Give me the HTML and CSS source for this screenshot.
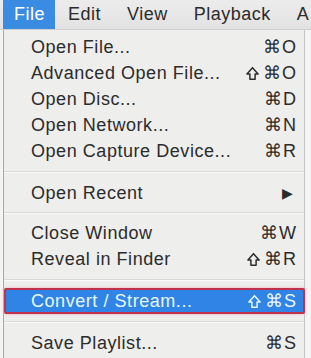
FILE: index.html
```html
<!DOCTYPE html>
<html lang="en">

<head>
    <meta charset="UTF-8">
    <meta name="viewport" content="width=device-width, initial-scale=1.0">
    <title>File Menu</title>
    <link rel="stylesheet" href="styles.css">
</head>

<body>
    <div class="menubar">
        <span class="title active">File</span>
        <span class="title">Edit</span>
        <span class="title">View</span>
        <span class="title">Playback</span>
        <span class="title">A</span>
    </div>
    <div class="menu">
        <div class="row"><span>Open File...</span><span class="key">⌘O</span></div>
        <div class="row"><span>Advanced Open File...</span><span class="key"><svg class="shift" viewBox="0 0 14 15"><path d="M7 1.2 L13 8 H9.8 V13.8 H4.2 V8 H1 Z"/></svg>⌘O</span></div>
        <div class="row"><span>Open Disc...</span><span class="key">⌘D</span></div>
        <div class="row"><span>Open Network...</span><span class="key">⌘N</span></div>
        <div class="row"><span>Open Capture Device...</span><span class="key">⌘R</span></div>
        <div class="sep"></div>
        <div class="row"><span>Open Recent</span><span class="arrow">▶</span></div>
        <div class="sep small"></div>
        <div class="row"><span>Close Window</span><span class="key">⌘W</span></div>
        <div class="row"><span>Reveal in Finder</span><span class="key"><svg class="shift" viewBox="0 0 14 15"><path d="M7 1.2 L13 8 H9.8 V13.8 H4.2 V8 H1 Z"/></svg>⌘R</span></div>
        <div class="sep"></div>
        <div class="row selected"><span>Convert / Stream...</span><span class="key"><svg class="shift" viewBox="0 0 14 15"><path d="M7 1.2 L13 8 H9.8 V13.8 H4.2 V8 H1 Z"/></svg>⌘S</span></div>
        <div class="sep"></div>
        <div class="row"><span>Save Playlist...</span><span class="key">⌘S</span></div>
    </div>
</body>

</html>
```

FILE: styles.css
```css
body {
    margin: 0;
    padding: 0;
    width: 311px;
    height: 358px;
    overflow: hidden;
    background-color: #f4f4f4;
    font-family: "Liberation Sans", Arial, sans-serif;
    color: #2b2b2b;
}

.menubar {
    height: 30px;
    display: flex;
    align-items: stretch;
    padding-left: 3px;
    background: linear-gradient(#ececec, #e2e2e2);
    border-bottom: 1px solid #cfcfcf;
    box-sizing: border-box;
    font-size: 18px;
    letter-spacing: 0.5px;
}

.title {
    display: flex;
    align-items: center;
    padding: 0 13px;
    white-space: nowrap;
}

.title.active {
    padding: 0 10px 0 11px;
    background-color: #3a8ce2;
    color: #fff;
}

.menu {
    margin-left: 3px;
    width: 302px;
    height: 328px;
    padding-top: 4px;
    box-sizing: border-box;
    background-color: #eeeeed;
    border-left: 1px solid #a9a9a9;
    border-right: 1px solid #c4c4c4;
}

.row {
    height: 26px;
    display: flex;
    align-items: center;
    justify-content: space-between;
    padding: 0 7px 0 27px;
    font-size: 18px;
    letter-spacing: 0.55px;
}

.key {
    display: flex;
    align-items: center;
    gap: 4px;
    letter-spacing: 1px;
}

.shift {
    width: 13px;
    height: 15px;
    fill: none;
    stroke: currentColor;
    stroke-width: 1.6;
    stroke-linejoin: round;
}

.arrow {
    font-size: 14px;
    padding-right: 3px;
}

.sep {
    height: 16px;
    display: flex;
    align-items: center;
}

.sep::before {
    content: "";
    flex: 1;
    height: 1px;
    background-color: #d9d9d9;
    border-bottom: 1px solid #fafafa;
}

.sep.small {
    height: 14px;
}

.row.selected {
    margin: 0 -1px 0 0;
    box-sizing: border-box;
    background-color: #2f84e6;
    border: 2px solid #c0324c;
    border-radius: 2px;
    box-shadow: 0 0 3px #f3a9b4;
    color: #e8f7ff;
    padding-left: 25px;
    padding-right: 6px;
}
```
